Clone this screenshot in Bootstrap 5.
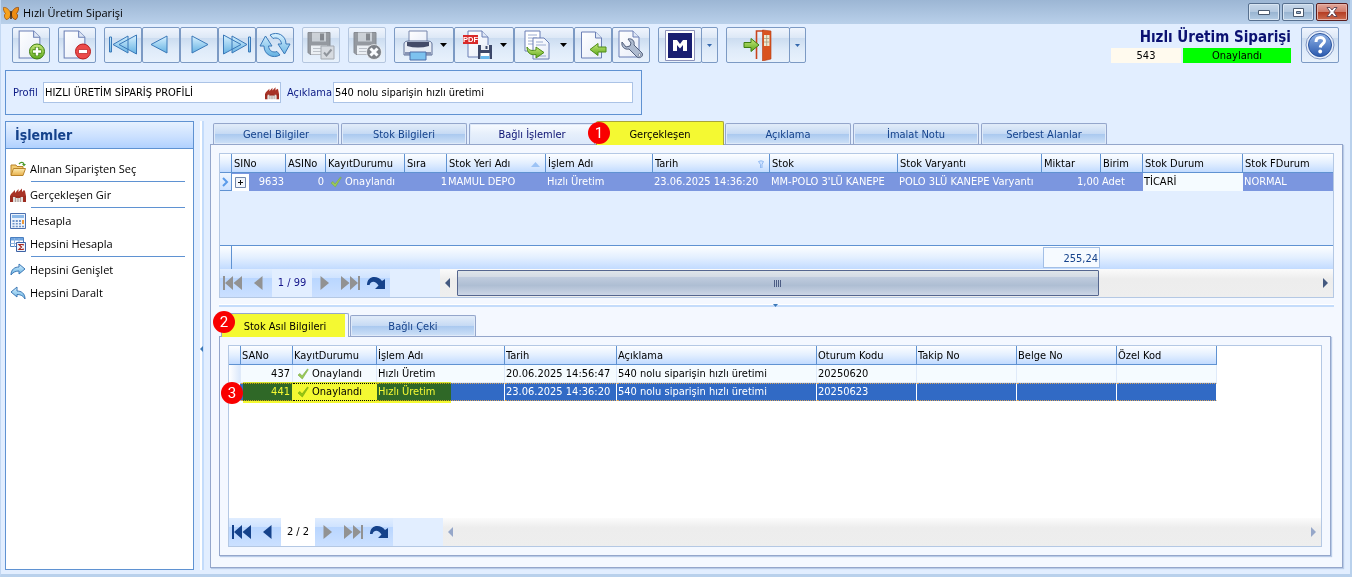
<!DOCTYPE html>
<html lang="tr">
<head>
<meta charset="utf-8">
<meta name="viewport" content="width=device-width, initial-scale=1">
<title>Hızlı Üretim Siparişi</title>
<link href="https://cdn.jsdelivr.net/npm/bootstrap@5.3.0/dist/css/bootstrap.min.css" rel="stylesheet">
<style>
:root{--line:#5f92d2;--soft:#b4c8e4;--edge:#94a6cb;--navy:#15428b;--bg:#e2eeff;--hd:linear-gradient(#fdfeff,#e3efff 50%,#c2dbff)}
body{font-family:"DejaVu Sans Condensed","DejaVu Sans",sans-serif;font-size:11px;line-height:14px;color:#000;background:var(--bg);border-left:1px solid #c3d8f2;border-right:2px solid #b9d1ec;border-bottom:3px solid #b9d1ec}
button{font-family:inherit;font-size:inherit;line-height:inherit;color:inherit;padding:0;border:0;background:none}
svg{display:block;flex:none}
.title-bar{height:24px;background:linear-gradient(#9cb6d4,#b9d0ea);font-family:"Open Sans",sans-serif;font-size:11px;margin:0 -2px 0 -1px}
.win-btn{width:32px;height:18px;border:1px solid #57708f;border-radius:2px;background:linear-gradient(#c8d8ea,#b3c8df 50%,#98b4d1 51%,#b4cce4);box-shadow:inset 0 0 0 1px #d8e5f2}
.win-close{border-color:#5b1d1d;background:linear-gradient(#e3a79b,#cf7a68 50%,#b43c22 51%,#cc6d50);box-shadow:inset 0 0 0 1px #e6b3a8}
.tool-row{padding:3px 11px 0}
.tool-btn{width:38px;height:36px;border:1px solid #7c9ac4;border-radius:2px;background:linear-gradient(#f0f5fd,#dde8f6 28%,#cbdcf0 29%,#dfebf9 65%,#e8f1fc)}
.tool-btn:disabled{border-color:#b4c6df}
.tool-btn:disabled svg{opacity:.85}
.tool-wide{width:60px;padding:0 6px 0 8px}.tool-m{width:44px}.tool-exit{width:64px}.tool-drop{width:17px;margin-left:-1px}
.doc-info{margin-right:10px}
.doc-title{font-size:15px;line-height:21px;font-weight:700;color:#0b1172}
.doc-no{width:70px;height:15px;line-height:16px;background:#fffaee}
.doc-state{width:108px;height:15px;line-height:16px;background:#0f0}
.profile-box{max-width:637px;height:45px;margin-top:7px;border:1px solid var(--line);color:#0b1a85;padding:0 7px}
.lbl-a{width:30px}.lbl-b{width:52px;padding-left:6px}
.field-box{height:21px;border:1px solid #abc3e6;background:#fff}
.field-box input{border:0;outline:0;padding:0 1px;min-width:0;height:19px;color:#000;background:transparent;font-size:11px}
.field-a{flex:0 1 238px;padding-right:1px}.field-b{flex:0 1 300px}
.side-pane{flex:0 0 189px;border:1px solid var(--line);background:#fff;margin-bottom:4px;font-family:"Open Sans",sans-serif}
.side-head{height:27px;font:700 14px/26px "DejaVu Sans Condensed",sans-serif;color:var(--navy);padding-left:9px;border-bottom:1px solid var(--line);background:linear-gradient(#e6f1ff,#c9dfff 60%,#b0d1ff)}
.side-link{height:23px;color:#000;text-decoration:none;padding-left:4px;gap:4px}
.side-sep{height:3px;margin:0 8px 0 25px;border-top:1px solid #fff;border-bottom:1px solid #fff;background:var(--line)}
.main-row{padding:6px 7px 0 4px}
.v-split{flex:0 0 16px;margin-bottom:4px}
.v-split i{width:4px;margin-left:6px;background:linear-gradient(90deg,#fff 50%,#c4dcfb 50%)}
.right-col{min-width:0;margin-bottom:6px}
.tab-strip{gap:2px;padding-left:3px}
.tab-btn{width:126px;height:21px;border:1px solid var(--edge);border-bottom:0;border-radius:2px 2px 0 0;color:var(--navy);background:linear-gradient(#e3edf9,#c6daf4 48%,#a9c8ef 50%,#cfe1f7);box-shadow:inset 0 0 0 1px #dfeaf9;position:relative;padding-top:2px}
.tab-hot{background:linear-gradient(#f8fbff,#e6effb 50%,#dbe8fa);color:#0b1172}
.tab-on{height:24px;width:128px;margin:0 -1px -1px;background:#f4f932;color:#000;border-color:#a8a53a;box-shadow:none;z-index:1}
.tab-inner{background:linear-gradient(90deg,#f4f932 98%,#f4f8ff 98%);border-color:var(--edge)}
.mark-no{position:absolute;width:22px;height:22px;border-radius:50%;background:#f90000;color:#fff;font:15px/22px Roboto,sans-serif;text-align:center;z-index:3}
.mark-1,.mark-2{left:-9px;top:0}.mark-3{left:-8px;bottom:-3px}
.tab-inner .mark-2{top:-3px}
.work-pane{border:1px solid var(--edge);background:#f4f8ff;padding:8px;box-shadow:1px 1px 1px #b8cbe8}
.grid-box{border:1px solid var(--soft);background:var(--bg);min-width:0}
.grid-box.white{background:#fff}
.data-grid{table-layout:fixed;border-collapse:separate;border-spacing:0;width:100%}
.data-grid th,.data-grid td{padding:0 2px;white-space:nowrap;overflow:hidden;font-weight:400}
.data-grid th{height:19px;padding:2px 1px 0;background:var(--hd);border-right:1px solid var(--line);border-bottom:1px solid var(--line);line-height:16px}
.g-top th{padding-left:2px}
.data-grid td{height:18px;line-height:16px;padding-left:1px}
.num{text-align:right}
.g-top th:last-child{border-right:0}
.g-top .row-sel td{background:#7b96df;color:#fff}
.g-top .row-sel td.cell-ind{background:linear-gradient(#eef5ff,#cfe2ff);border-right:1px solid var(--line);border-bottom:1px solid var(--line);padding:0}
.g-top .row-sel td.cell-focus{background:#f5fbff;color:#000}
.g-top .state-cell{padding-left:3px}
.state-cell{gap:3px}
.plus-box{width:17px;height:17px;background:#fff;margin-left:-1px}
.g-top .filler td{height:54px}
.g-top tfoot td{height:24px;background:var(--hd);border-top:1px solid var(--line);padding:0}
.g-top tfoot td:first-child{border-right:1px solid var(--line)}
.sum-box{height:21px;margin:0 1px;border:1px solid #a3bfe6;background:#f6faff;color:var(--navy);text-align:right;padding:3px 1px 0}
.g-low{width:988px}
.g-low td{background:#f5fbff;border-right:1px solid #dfeaf9;border-bottom:1px solid #dfeaf9}
.g-low td:first-child{background:linear-gradient(90deg,#fff,#dbe8fb)}
.g-low .state-cell{padding-left:3px}
.g-low .row-sel td{background:#316ac5;color:#fff;border-right-color:#fff;border-top:1px dotted #d9a45a;border-bottom:1px dotted #d9a45a}
.g-low .row-sel td.cell-focus{background:#fff;color:#000;border-color:#000;border-right-color:#fff}
.g-low .row-sel td:first-child{background:#fff;border-color:#fff;border-right-color:#316ac5}
.hilite{position:absolute;left:14px;bottom:-2px;width:208px;height:21px;background:#f4f932;mix-blend-mode:multiply;z-index:2}
.pager{height:28px}
.pg-set{background:linear-gradient(#e0edff,#cfe3ff 32%,#b9d6ff 33%,#cbe0ff)}
.pg-btn{width:26px;height:28px;color:var(--navy);padding-right:2px}
.pg-btn:disabled{color:#929292}
.pg-no{color:#15158b;text-align:center}
.pg-a{width:40px}.pg-b{width:34px;background:#fff;color:#000}
.pg-gap{width:50px;background:var(--bg)}
.scroll-x{background:linear-gradient(#fbfbfb,#ededed 35%,#eee)}
.arrow-btn{width:17px;padding-right:2px;color:#44597f}
.arrow-end{padding:0 0 0 1px}
.arrow-dim{color:#96a7c9}
.thumb-x{flex:0 1 642px;height:26px;margin-top:1px;border:1px solid #55668f;border-radius:1px;background:linear-gradient(#dfe5e9,#d3dae4 25%,#bfcbdd 27%,#aebed3 60%,#ccd6e6)}
.h-split{height:3px;background:linear-gradient(#fff 34%,#c4dcfb 34%);margin:6px 0}
.h-split svg{margin-left:-4px}
.inner-pane{margin-right:3px;margin-bottom:3px}
</style>
</head>
<body class="d-flex flex-column min-vh-100 overflow-x-hidden">
<svg width="0" height="0" class="position-absolute" aria-hidden="true">
<defs>
<linearGradient id="gb" x1="0" y1="0" x2="0" y2="1"><stop offset="0" stop-color="#d8f1ff"/><stop offset="1" stop-color="#63b1e2"/></linearGradient>
<linearGradient id="gp" x1="0" y1="0" x2="1" y2="1"><stop offset="0" stop-color="#fff"/><stop offset="1" stop-color="#e6ecf8"/></linearGradient>
<linearGradient id="gg" x1="0" y1="0" x2="0" y2="1"><stop offset="0" stop-color="#c6e87b"/><stop offset="1" stop-color="#5ea91c"/></linearGradient>
<linearGradient id="gf" x1="0" y1="0" x2="0" y2="1"><stop offset="0" stop-color="#fdebb0"/><stop offset="1" stop-color="#e8b04a"/></linearGradient>
<linearGradient id="gh" x1="0" y1="0" x2="0" y2="1"><stop offset="0" stop-color="#8fb2e6"/><stop offset="1" stop-color="#2a59ae"/></linearGradient>
<symbol id="page" viewBox="0 0 22 28"><path d="M1 1h14l6 6v20H1z" fill="url(#gp)" stroke="#6a7fb5"/><path d="M15 1v6h6" fill="#dfe7f5" stroke="#6a7fb5"/></symbol>
<symbol id="floppy" viewBox="0 0 24 24"><path d="M1 1h22v22H3l-2-2z" fill="#8a8d92" stroke="#777a80"/><path d="M5 1h14v9H5z" fill="#c9cdd2"/><path d="M13 2h4v7h-4z" fill="#75787d"/><path d="M4 14h16v9H4z" fill="#eef1f4"/><path d="M6 17h12M6 20h12" stroke="#b6bac0"/></symbol>
<symbol id="factory" viewBox="0 0 16 16"><path d="M0 9l1-2 4-4v3l3.500-4v3L12 1.500V5l2-2 1 1 1 5v2H0z" fill="#a83226"/><path d="M0 9h3v6H0zM5 9h6v1.500H5zM13 9h3v6h-3z" fill="#9c2b20"/><path d="M3 10h2v5H3zM11 10h2v5h-2zM6 11h4v4H6z" fill="#e2dedb"/><path d="M8 11v4M5.500 10v5M10.500 10v5" stroke="#9b8c88" stroke-width=".8"/></symbol>
<symbol id="tick" viewBox="0 0 12 12"><path d="M1 7l2-1.500L5 8l5.500-7 .8.600L5.300 11z" fill="#9ccb55" stroke="#78aa44" stroke-width=".6"/></symbol>
<symbol id="pfirst" viewBox="0 0 20 16"><path d="M1 1h2v14H1zM11 1v14L3 8zM20 1v14L11.500 8z" fill="currentColor"/></symbol>
<symbol id="pprev" viewBox="0 0 10 16"><path d="M9.500 1v14L1 8z" fill="currentColor"/></symbol>
<symbol id="predo" viewBox="0 0 20 14"><path d="M1 9C1-1 12-1 16 5l3-2v10H9l3.500-3.500C10 5 5 4 3.500 9z" fill="currentColor"/></symbol>
<symbol id="share" viewBox="0 0 16 14"><path d="M1 12C1 6 5 4 9 4V1l6 5-6 5V8C6 8 3 9 1 12z" fill="url(#gb)" stroke="#3d78b5"/></symbol>
</defs>
</svg>

<header class="title-bar d-flex align-items-center justify-content-between pe-1">
  <div class="d-flex align-items-center gap-1" style="padding:2px 0 0 3px">
    <svg width="16" height="15" viewBox="0 0 16 15"><path d="M7.500 7C6 3 3 1 .500 1.500 0 3 1 6 2.500 7.500c-1.500 1-1.500 4 .5 6C5 13.500 7 12 7.500 9z" fill="#f7a21e" stroke="#a4560c" stroke-width=".8"/><path d="M8.500 7C10 3 13 1 15.500 1.500 16 3 15 6 13.500 7.500c1.500 1 1.500 4-.5 6-2 0-4-1.500-4.500-4.500z" fill="#ee8d14" stroke="#8c4308" stroke-width=".8"/><path d="M8 5v8" stroke="#40240a" stroke-width="1.500"/></svg>
    <span>Hızlı Üretim Siparişi</span>
  </div>
  <div class="d-flex" style="gap:2px">
    <button class="win-btn d-flex align-items-center justify-content-center" aria-label="Simge durumuna küçült"><svg width="12" height="5" viewBox="0 0 12 5"><path d="M.5.5h11v4H.5z" fill="#fff" stroke="#4a5a70"/></svg></button>
    <button class="win-btn d-flex align-items-center justify-content-center" aria-label="Ekranı kapla"><svg width="11" height="9" viewBox="0 0 11 9"><path d="M.5.500h10v8H.5z" fill="#fff" stroke="#4a5a70"/><path d="M3.500 3.500h4v2h-4z" fill="#9cb6d4" stroke="#4a5a70"/></svg></button>
    <button class="win-btn win-close d-flex align-items-center justify-content-center" aria-label="Kapat"><svg width="12" height="10" viewBox="0 0 12 10"><path d="M1 .5h3l2 2.500L8 .5h3L7.800 5 11 9.500H8L6 7 4 9.500H1L4.200 5z" fill="#fff" stroke="#5a4250" stroke-width=".9"/></svg></button>
  </div>
</header>

<div class="tool-row d-flex justify-content-between">
  <div class="d-flex gap-2" role="toolbar" aria-label="Araçlar">
    <button class="tool-btn d-flex align-items-center justify-content-center" aria-label="Yeni"><svg width="30" height="30" viewBox="0 0 30 30"><use href="#page" x="2" y="0" width="23" height="29"/><circle cx="21" cy="21.500" r="7.500" fill="url(#gg)" stroke="#3f7d12"/><path d="M21 17v9M16.500 21.500h9" stroke="#4a8a17" stroke-width="4.500"/><path d="M21 17.500v8M17 21.500h8" stroke="#fff" stroke-width="2.500"/></svg></button>
    <button class="tool-btn d-flex align-items-center justify-content-center" aria-label="Sil"><svg width="30" height="30" viewBox="0 0 30 30"><use href="#page" x="1" y="0" width="23" height="29"/><circle cx="21" cy="21.500" r="7.500" fill="#ec4a4a" stroke="#b81c1c"/><path d="M16.500 19.500h9v4h-9z" fill="#fff" stroke="#b81c1c" stroke-width=".7"/></svg></button>
    <div class="d-flex">
      <button class="tool-btn d-flex align-items-center justify-content-center" aria-label="İlk kayıt"><svg width="30" height="24" viewBox="0 0 30 24"><path d="M1.500 4h2v15h-2zM20 3v17L5 11.500zM28.500 2v19L11 11.500z" fill="url(#gb)" stroke="#3a78b8"/></svg></button>
      <button class="tool-btn d-flex align-items-center justify-content-center" aria-label="Önceki kayıt"><svg width="30" height="24" viewBox="0 0 30 24"><path d="M21 3v17L5 11.500z" fill="url(#gb)" stroke="#3a78b8"/></svg></button>
      <button class="tool-btn d-flex align-items-center justify-content-center" aria-label="Sonraki kayıt"><svg width="30" height="24" viewBox="0 0 30 24"><path d="M8 3v17l16-8.500z" fill="url(#gb)" stroke="#3a78b8"/></svg></button>
      <button class="tool-btn d-flex align-items-center justify-content-center" aria-label="Son kayıt"><svg width="30" height="24" viewBox="0 0 30 24"><path d="M26.500 4h2v15h-2zM1.500 2v19L19 11.500zM10 3v17l15-8.500z" fill="url(#gb)" stroke="#3a78b8"/></svg></button>
      <button class="tool-btn d-flex align-items-center justify-content-center" aria-label="Yenile"><svg width="32" height="26" viewBox="0 0 32 26"><path d="M1 14L6.500 4 13 14H9.500C10 19 14 21 18 19.500L21 23C14 27 5 23 5 14zM31 12l-5.500 10L19 12h3.500C22 7 18 5 14 6.500L11 3C18-1 27 3 27 12z" fill="url(#gb)" stroke="#3a78b8"/></svg></button>
    </div>
    <button class="tool-btn d-flex align-items-center justify-content-center" disabled aria-label="Kaydet"><svg width="30" height="30" viewBox="0 0 30 30"><use href="#floppy" x="1" y="1" width="24" height="25"/><path d="M15 16h13v13H15z" fill="#d5d8dc" stroke="#999da3"/><path d="M18 22.500l2.500 3 5-6" fill="none" stroke="#82868c" stroke-width="2"/></svg></button>
    <button class="tool-btn d-flex align-items-center justify-content-center" disabled aria-label="Kaydet ve kapat"><svg width="30" height="30" viewBox="0 0 30 30"><use href="#floppy" x="1" y="1" width="24" height="25"/><circle cx="22" cy="22" r="7.500" fill="#6d7075" stroke="#fff" stroke-width=".7"/><path d="M18.500 18.500l7 7M25.500 18.500l-7 7" stroke="#fff" stroke-width="3"/></svg></button>
    <div class="d-flex">
      <button class="tool-btn tool-wide d-flex align-items-center justify-content-between" aria-label="Yazdır"><svg width="30" height="31" viewBox="0 0 30 31"><path d="M6 1h18v13H6z" fill="url(#gp)" stroke="#7686ac"/><path d="M1 14q0-3 5-3h18q5 0 5 3v11H1z" fill="#e7ecf5" stroke="#5d6e96"/><path d="M4 12h22v4q-11 3-22 0z" fill="#434b68"/><path d="M2 22h26v3H2z" fill="#8794b4"/><path d="M7 22h16v8H7z" fill="#7dc2ef" stroke="#4f6ea8"/></svg><svg width="7" height="4" viewBox="0 0 7 4"><path d="M0 0h7L3.500 4z"/></svg></button>
      <button class="tool-btn tool-wide d-flex align-items-center justify-content-between" aria-label="PDF olarak kaydet"><svg width="30" height="30" viewBox="0 0 30 30"><use href="#page" x="4" y="0" width="22" height="28"/><path d="M0 5h15v9H0z" fill="#d92a2a"/><text x="7.500" y="12.300" font-size="7.500" font-weight="700" fill="#fff" text-anchor="middle" font-family="Liberation Sans">PDF</text><path d="M15 15h14v14H15z" fill="#3d4869"/><path d="M18 15h8v5h-8z" fill="#e9edf5"/><path d="M22.500 16h2v3h-2z" fill="#3d4869"/><path d="M17.500 23h9v6h-9z" fill="#fff"/><path d="M17.500 26h9v3h-9z" fill="#69b8ec"/></svg><svg width="7" height="4" viewBox="0 0 7 4"><path d="M0 0h7L3.500 4z"/></svg></button>
      <button class="tool-btn tool-wide d-flex align-items-center justify-content-between" aria-label="Aktar"><svg width="30" height="30" viewBox="0 0 30 30"><path d="M2 1h15v20H2z" fill="#fff" stroke="#6a7fb5"/><path d="M5 5h9M5 8h9M5 11h9M5 14h9" stroke="#9aabd0"/><path d="M10 8h11l5 5v16H10z" fill="url(#gp)" stroke="#6a7fb5"/><path d="M13 12h7M13 15h10M13 26h10" stroke="#9aabd0"/><path d="M4 17c2 3.500 5 4 9 3v-3l8 5.500-8 5.500v-3.500c-6 1-9-2-9-7.500z" fill="url(#gg)" stroke="#4f8d18"/></svg><svg width="7" height="4" viewBox="0 0 7 4"><path d="M0 0h7L3.500 4z"/></svg></button>
      <button class="tool-btn d-flex align-items-center justify-content-center" aria-label="İçe al"><svg width="30" height="30" viewBox="0 0 30 30"><use href="#page" x="2" y="1" width="23" height="28"/><path d="M12 19.500l8-6v3.500h8v5h-8v3.500z" fill="url(#gg)" stroke="#4f8d18"/></svg></button>
      <button class="tool-btn d-flex align-items-center justify-content-center" aria-label="Ayarlar"><svg width="30" height="30" viewBox="0 0 30 30"><use href="#page" x="2" y="0" width="22" height="28"/><path d="M6 12c-1 5 3 8 7 7l8 8c3 2 7-1 5-4l-8-8c1-4-2-7-6-6l3 4-1 3-4 1z" fill="#aebbd0" stroke="#53607c"/><circle cx="23.500" cy="25" r="1.300" fill="#fff" stroke="#53607c" stroke-width=".6"/></svg></button>
    </div>
    <div class="d-flex">
      <button class="tool-btn tool-m d-flex align-items-center justify-content-center" aria-label="M"><svg width="30" height="31" viewBox="0 0 30 31"><path d="M.5.5h29v30H.5z" fill="#fff" stroke="#8d93bb"/><path d="M3 3h24v25H3z" fill="#1a1f71"/><path d="M8 21V10h4l3 4 3-4h4v11h-4v-6l-3 3.500-3-3.500v6z" fill="#fff"/></svg></button>
      <button class="tool-btn tool-drop d-flex align-items-center justify-content-center" aria-label="M seçenekleri"><svg width="5" height="3" viewBox="0 0 5 3"><path d="M0 0h5L2.500 3z" fill="#3568ad"/></svg></button>
    </div>
    <div class="d-flex">
      <button class="tool-btn tool-exit d-flex align-items-center justify-content-center" aria-label="Çıkış"><svg width="30" height="32" viewBox="0 0 30 32"><path d="M13.500 30V2H21" fill="none" stroke="#c9431c" stroke-width="1.600"/><path d="M19.500 1l8.500 1v28l-8.500 2z" fill="#d9531f" stroke="#b33a12" stroke-width=".6"/><path d="M21 6h5.500v11H21z" fill="#efe8d0"/><path d="M23.700 6v11M21 9.500h5.500M21 13h5.500" stroke="#a39a7c" stroke-width=".8"/><path d="M1 13.500h7v-4l8 6.500-8 6.500v-4H1z" fill="url(#gg)" stroke="#3f7d12"/></svg></button>
      <button class="tool-btn tool-drop d-flex align-items-center justify-content-center" aria-label="Çıkış seçenekleri"><svg width="5" height="3" viewBox="0 0 5 3"><path d="M0 0h5L2.500 3z" fill="#3568ad"/></svg></button>
    </div>
  </div>
  <div class="d-flex">
    <div class="doc-info text-end">
      <div class="doc-title">Hızlı Üretim Siparişi</div>
      <div class="d-flex text-center" style="gap:2px"><div class="doc-no">543</div><div class="doc-state">Onaylandı</div></div>
    </div>
    <button class="tool-btn d-flex align-items-center justify-content-center" aria-label="Yardım"><svg width="30" height="30" viewBox="0 0 30 30"><circle cx="15" cy="15" r="14" fill="#e9f0fb" stroke="#8197c2"/><circle cx="15" cy="15" r="11.500" fill="url(#gh)" stroke="#2b559f"/><path d="M11 12c0-6 8.500-5.500 8.500-1 0 3-4 3-4.300 6.500" fill="none" stroke="#fff" stroke-width="3"/><circle cx="15.200" cy="21.500" r="1.900" fill="#fff"/></svg></button>
  </div>
</div>

<form class="profile-box d-flex align-items-center ms-1">
  <label class="lbl-a" for="prof">Profil</label>
  <div class="field-box field-a d-flex align-items-center"><input id="prof" class="flex-grow-1" value="HIZLI ÜRETİM SİPARİŞ PROFİLİ"><svg width="14" height="14"><use href="#factory" width="14" height="14"/></svg></div>
  <label class="lbl-b" for="acik">Açıklama</label>
  <div class="field-box field-b d-flex"><input id="acik" class="flex-grow-1" value="540 nolu siparişin hızlı üretimi"></div>
</form>

<main class="main-row d-flex flex-grow-1">
  <nav class="side-pane" aria-label="İşlemler">
    <div class="side-head mb-2">İşlemler</div>
    <a class="side-link d-flex align-items-center" href="#"><svg width="16" height="16" viewBox="0 0 16 16"><path d="M1 14V4h5l1 1.500h6V8" fill="#f3cc72" stroke="#b9832a"/><path d="M1 14.500L3.500 7.500h12L13 14.500z" fill="url(#gf)" stroke="#b9832a"/><path d="M9 3c2-2.500 4-2 5 0" fill="none" stroke="#4a9a2a" stroke-width="1.300"/><path d="M12 3h4l-2 2.500z" fill="#4a9a2a"/></svg>Alınan Siparişten Seç</a>
    <div class="side-sep"></div>
    <a class="side-link d-flex align-items-center" href="#"><svg width="16" height="16"><use href="#factory" width="16" height="16"/></svg>Gerçekleşen Gir</a>
    <div class="side-sep"></div>
    <a class="side-link d-flex align-items-center" href="#"><svg width="16" height="16" viewBox="0 0 16 16"><path d="M.5.500h15v15H.5z" fill="#edf3fc" stroke="#4a6fae"/><path d="M2 2h12v3H2z" fill="#8bb8e8"/><path d="M2.500 7h2v2h-2zM5.800 7h2v2h-2zM9 7h2v2H9zM2.500 10h2v1.500h-2zM5.800 10h2v1.500h-2zM9 10h2v1.500H9zM2.500 12.800h2v1.500h-2zM5.800 12.800h2v1.500h-2zM9 12.800h2v1.500H9zM12 12.800h2v1.500h-2z" fill="#6f93c8"/><path d="M12 7h2v4h-2z" fill="#ee9a3a"/></svg>Hesapla</a>
    <a class="side-link d-flex align-items-center" href="#"><svg width="16" height="16" viewBox="0 0 16 16"><path d="M.5 1.500h13v9H.5z" fill="#fff" stroke="#4a7fc0"/><path d="M1 2h12v2.500H1z" fill="#6fa5e0"/><path d="M.5 7.500h13M4.500 2v9M9 2v9" stroke="#8fb4e0"/><path d="M6.500 6.500h9v9h-9z" fill="#eef3fb" stroke="#3d62a5"/><path d="M13.200 9.500v-1H9l2.500 2.500L9 13.500h4.200v-1" fill="none" stroke="#a52820" stroke-width="1.200"/></svg>Hepsini Hesapla</a>
    <div class="side-sep"></div>
    <a class="side-link d-flex align-items-center" href="#"><svg width="16" height="14"><use href="#share" width="16" height="14"/></svg>Hepsini Genişlet</a>
    <a class="side-link d-flex align-items-center" href="#"><svg width="16" height="14" viewBox="0 0 16 14"><path d="M15 13c0-6-4-8-8-8V1L1 6l6 5V8.500c3 0 6 1 8 4.500z" fill="url(#gb)" stroke="#3d78b5"/></svg>Hepsini Daralt</a>
  </nav>
  <div class="v-split d-flex position-relative"><i class="d-block"></i><svg class="position-absolute top-50 start-0 ms-1" width="5" height="6" viewBox="0 0 5 6"><path d="M5 0v6L2 3z" fill="#3a78b8"/></svg></div>

  <section class="right-col flex-grow-1 d-flex flex-column">
    <div class="tab-strip d-flex align-items-end" role="tablist">
      <button class="tab-btn" role="tab">Genel Bilgiler</button>
      <button class="tab-btn" role="tab">Stok Bilgileri</button>
      <button class="tab-btn tab-hot" role="tab">Bağlı İşlemler</button>
      <button class="tab-btn tab-on" role="tab" aria-selected="true">Gerçekleşen<span class="mark-no mark-1">1</span></button>
      <button class="tab-btn" role="tab">Açıklama</button>
      <button class="tab-btn" role="tab">İmalat Notu</button>
      <button class="tab-btn" role="tab">Serbest Alanlar</button>
    </div>
    <div class="work-pane flex-grow-1 d-flex flex-column">
      <div class="grid-box">
        <table class="data-grid g-top">
          <colgroup><col style="width:12px"><col style="width:54px"><col style="width:40px"><col style="width:79px"><col style="width:42px"><col style="width:99px"><col style="width:107px"><col style="width:117px"><col style="width:128px"><col style="width:144px"><col style="width:59px"><col style="width:42px"><col style="width:100px"><col></colgroup>
          <thead><tr><th></th><th>SINo</th><th>ASINo</th><th>KayıtDurumu</th><th>Sıra</th>
            <th><div class="d-flex justify-content-between align-items-center pe-1">Stok Yeri Adı<svg width="9" height="5" viewBox="0 0 9 5"><path d="M0 5l4.500-5L9 5z" fill="#9cc3f5"/></svg></div></th>
            <th>İşlem Adı</th>
            <th><div class="d-flex justify-content-between align-items-center pe-1">Tarih<svg width="6" height="8" viewBox="0 0 6 8"><path d="M.5 1.500q2.500-1.500 5 0L4 4.500V8H2.500V4.500z" fill="#cfe3ff" stroke="#8bb6f0" stroke-width=".9"/></svg></div></th>
            <th>Stok</th><th>Stok Varyantı</th><th>Miktar</th><th>Birim</th><th>Stok Durum</th><th>Stok FDurum</th></tr></thead>
          <tbody>
            <tr class="row-sel"><td class="cell-ind"><svg width="7" height="10" viewBox="0 0 7 10" class="mx-auto"><path d="M1 1l4 4-4 4" fill="none" stroke="#5b9bea" stroke-width="2"/></svg></td>
            <td><div class="d-flex justify-content-between align-items-center"><span class="plus-box d-flex align-items-center justify-content-center"><svg width="11" height="11" viewBox="0 0 11 11"><path d="M.5.500h10v10H.5z" fill="#f3f6fb" stroke="#7388ac"/><path d="M5.500 3v5M3 5.500h5" stroke="#111"/></svg></span>9633</div></td>
            <td class="num">0</td><td><div class="state-cell d-flex align-items-center"><svg width="12" height="12"><use href="#tick" width="12" height="12"/></svg>Onaylandı</div></td><td class="num px-0">1</td><td>MAMUL DEPO</td><td>Hızlı Üretim</td><td>23.06.2025 14:36:20</td><td>MM-POLO 3'LÜ KANEPE</td><td>POLO 3LÜ KANEPE Varyantı</td><td class="num">1,00</td><td>Adet</td><td class="cell-focus">TİCARİ</td><td>NORMAL</td></tr>
            <tr class="filler"><td colspan="14"></td></tr>
          </tbody>
          <tfoot><tr><td></td><td colspan="9"></td><td><div class="sum-box">255,24</div></td><td colspan="3"></td></tr></tfoot>
        </table>
        <div class="pager d-flex">
          <div class="pg-set d-flex">
            <button class="pg-btn d-flex align-items-center justify-content-center" disabled aria-label="İlk"><svg width="20" height="16"><use href="#pfirst" width="20" height="16"/></svg></button>
            <button class="pg-btn d-flex align-items-center justify-content-center" disabled aria-label="Önceki"><svg width="10" height="16"><use href="#pprev" width="10" height="16"/></svg></button>
          </div>
          <div class="pg-no pg-a align-self-center">1 / 99</div>
          <div class="pg-set d-flex">
            <button class="pg-btn pe-0 d-flex align-items-center justify-content-center" disabled aria-label="Sonraki"><svg width="10" height="16"><use href="#pprev" width="10" height="16" transform="rotate(180 5 8)"/></svg></button>
            <button class="pg-btn pe-0 d-flex align-items-center justify-content-center" disabled aria-label="Son"><svg width="20" height="16"><use href="#pfirst" width="20" height="16" transform="rotate(180 10 8)"/></svg></button>
            <button class="pg-btn d-flex align-items-center justify-content-center" aria-label="Yenile"><svg width="20" height="14"><use href="#predo" width="20" height="14"/></svg></button>
          </div>
          <div class="pg-gap"></div>
          <div class="scroll-x d-flex flex-grow-1">
            <button class="arrow-btn d-flex align-items-center justify-content-center" aria-label="Sola kaydır"><svg width="5" height="10" viewBox="0 0 5 10"><path d="M5 0v10L0 5z" fill="currentColor"/></svg></button>
            <div class="thumb-x d-flex align-items-center justify-content-center"><svg width="8" height="7" viewBox="0 0 8 7"><path d="M.5 0v7M2.500 0v7M4.500 0v7M6.500 0v7" stroke="#4b5c84"/></svg></div>
            <button class="arrow-btn arrow-end ms-auto d-flex align-items-center justify-content-center" aria-label="Sağa kaydır"><svg width="5" height="10" viewBox="0 0 5 10"><path d="M0 0v10l5-5z" fill="currentColor"/></svg></button>
          </div>
        </div>
      </div>
      <div class="h-split position-relative"><svg class="position-absolute start-50 top-0" width="5" height="3" viewBox="0 0 5 3"><path d="M0 0h5L2.500 3z" fill="#3a78b8"/></svg></div>
      <div class="tab-strip d-flex align-items-end" role="tablist">
        <button class="tab-btn tab-on tab-inner" role="tab" aria-selected="true">Stok Asıl Bilgileri<span class="mark-no mark-2">2</span></button>
        <button class="tab-btn" role="tab">Bağlı Çeki</button>
      </div>
      <div class="work-pane inner-pane flex-grow-1 d-flex flex-column">
        <div class="grid-box white flex-grow-1 d-flex flex-column">
          <div class="position-relative align-self-start">
            <table class="data-grid g-low">
              <colgroup><col style="width:12px"><col style="width:52px"><col style="width:84px"><col style="width:128px"><col style="width:112px"><col style="width:200px"><col style="width:100px"><col style="width:100px"><col style="width:100px"><col style="width:100px"></colgroup>
              <thead><tr><th></th><th>SANo</th><th>KayıtDurumu</th><th>İşlem Adı</th><th>Tarih</th><th>Açıklama</th><th>Oturum Kodu</th><th>Takip No</th><th>Belge No</th><th>Özel Kod</th></tr></thead>
              <tbody>
                <tr><td></td><td class="num">437</td><td><div class="state-cell d-flex align-items-center"><svg width="12" height="12"><use href="#tick" width="12" height="12"/></svg>Onaylandı</div></td><td>Hızlı Üretim</td><td>20.06.2025 14:56:47</td><td>540 nolu siparişin hızlı üretimi</td><td>20250620</td><td></td><td></td><td></td></tr>
                <tr class="row-sel"><td></td><td class="num">441</td><td class="cell-focus"><div class="state-cell d-flex align-items-center"><svg width="12" height="12"><use href="#tick" width="12" height="12"/></svg>Onaylandı</div></td><td>Hızlı Üretim</td><td>23.06.2025 14:36:20</td><td>540 nolu siparişin hızlı üretimi</td><td>20250623</td><td></td><td></td><td></td></tr>
              </tbody>
            </table>
            <div class="hilite"></div>
            <span class="mark-no mark-3">3</span>
          </div>
          <div class="pager d-flex mt-auto">
            <div class="pg-set d-flex">
              <button class="pg-btn d-flex align-items-center justify-content-center" aria-label="İlk"><svg width="20" height="16"><use href="#pfirst" width="20" height="16"/></svg></button>
              <button class="pg-btn d-flex align-items-center justify-content-center" aria-label="Önceki"><svg width="10" height="16"><use href="#pprev" width="10" height="16"/></svg></button>
            </div>
            <div class="pg-no pg-b d-flex align-items-center justify-content-center">2 / 2</div>
            <div class="pg-set d-flex">
              <button class="pg-btn pe-0 d-flex align-items-center justify-content-center" disabled aria-label="Sonraki"><svg width="10" height="16"><use href="#pprev" width="10" height="16" transform="rotate(180 5 8)"/></svg></button>
              <button class="pg-btn pe-0 d-flex align-items-center justify-content-center" disabled aria-label="Son"><svg width="20" height="16"><use href="#pfirst" width="20" height="16" transform="rotate(180 10 8)"/></svg></button>
              <button class="pg-btn d-flex align-items-center justify-content-center" aria-label="Yenile"><svg width="20" height="14"><use href="#predo" width="20" height="14"/></svg></button>
            </div>
            <div class="pg-gap"></div>
            <div class="scroll-x d-flex flex-grow-1">
              <button class="arrow-btn arrow-dim d-flex align-items-center justify-content-center" aria-label="Sola kaydır"><svg width="5" height="10" viewBox="0 0 5 10"><path d="M5 0v10L0 5z" fill="currentColor"/></svg></button>
              <button class="arrow-btn arrow-end arrow-dim ms-auto d-flex align-items-center justify-content-center" aria-label="Sağa kaydır"><svg width="5" height="10" viewBox="0 0 5 10"><path d="M0 0v10l5-5z" fill="currentColor"/></svg></button>
            </div>
          </div>
        </div>
      </div>
    </div>
  </section>
</main>
<script src="https://cdn.jsdelivr.net/npm/bootstrap@5.3.0/dist/js/bootstrap.bundle.min.js"></script>
</body>
</html>
